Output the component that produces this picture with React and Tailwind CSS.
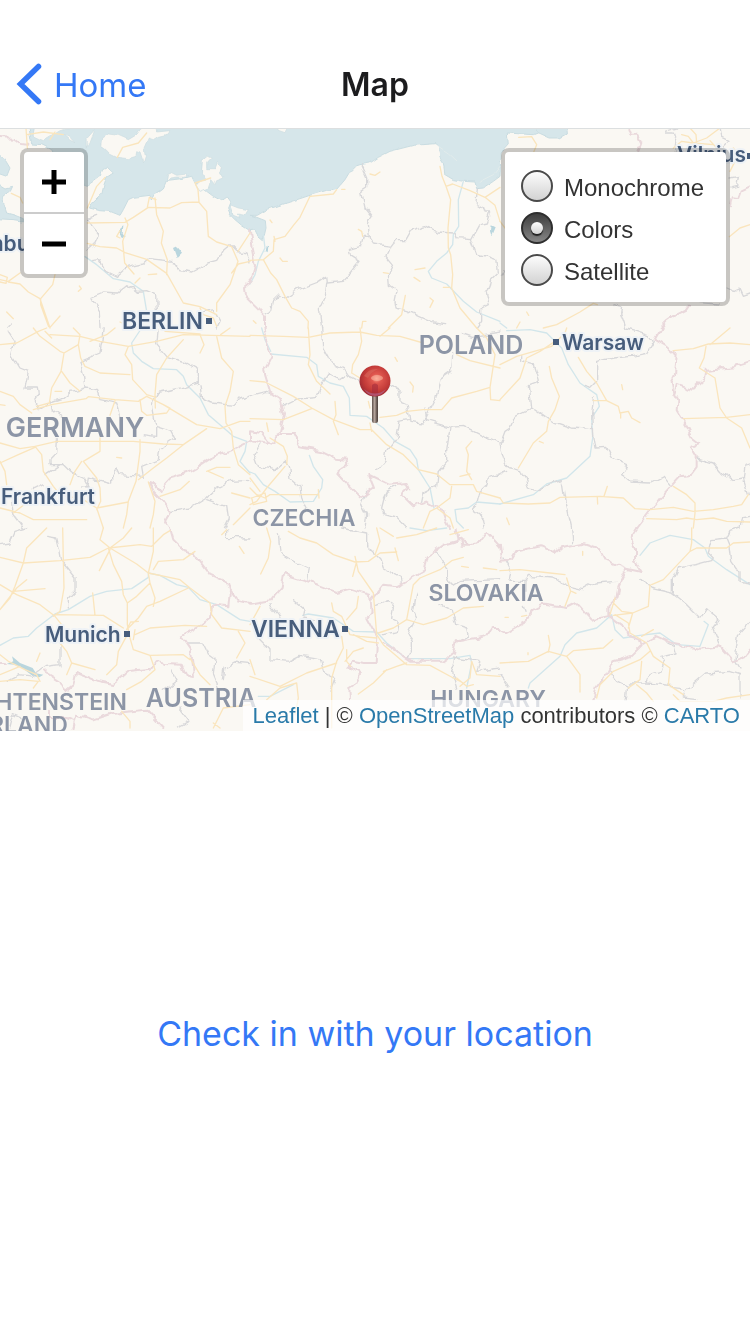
import { useState } from "react";

const LAYERS = ["Monochrome", "Colors", "Satellite"];

const COUNTRIES = [
  { name: "GERMANY", x: 75, y: 437, size: "text-[27px]" },
  { name: "POLAND", x: 471, y: 354, size: "text-[25px]" },
  { name: "CZECHIA", x: 304, y: 526, size: "text-[23px]" },
  { name: "SLOVAKIA", x: 486, y: 601, size: "text-[23px]" },
  { name: "AUSTRIA", x: 201, y: 707, size: "text-[25px]" },
  { name: "HUNGARY", x: 488, y: 707, size: "text-[23px]" },
  { name: "LIECHTENSTEIN", x: 36, y: 710, size: "text-[23px]" },
  { name: "SWITZERLAND", x: -16, y: 733, size: "text-[23px]" },
];

const CITIES = [
  { name: "BERLIN", x: 122, y: 329, size: "text-[23px]", dot: [206, 318] },
  { name: "Warsaw", x: 562, y: 350, size: "text-[21px]", dot: [553, 339] },
  { name: "VIENNA", x: 251, y: 637, size: "text-[23px]", dot: [342, 626] },
  { name: "Munich", x: 45, y: 642, size: "text-[21px]", dot: [124, 631] },
  { name: "Frankfurt", x: 1, y: 504, size: "text-[21px]" },
  { name: "Hamburg", x: -43, y: 251, size: "text-[21px]" },
  { name: "Vilnius", x: 677, y: 162, size: "text-[21px]", dot: [747, 153] },
];

/* Map lines, one entry per 250px sector; coordinates are thirds of a pixel. */
const SECTORS = [
  {
    x: 0,
    y: 128,
    roads:
      "M78 0L82 60M80 20L130 12L190 20M165 12L150 35M0 455L25 460L60 435M0 440L22 448L18 466L0 462M25 462L60 468L85 492L120 512L150 600M165 440L158 470L122 512L122 530L146 596M180 564L150 598M262 346L300 356L350 360L375 374L440 394L500 436L550 525L600 536L650 560M262 285L375 283L400 268L445 238L510 240L545 224L596 222L620 250L625 325L650 342L695 356L714 400L690 470L650 525L650 550M262 240L275 210L290 175L315 148M375 270L384 290L368 340L374 405L402 438M465 210L470 260L490 310L484 345L502 395L500 440M442 238L448 208L468 215M597 222L594 185L585 165L632 150M714 370L750 315M360 330L350 325L360 308M34 196L60 208L68 225M235 490L244 482L238 474M20 552L40 572M360 582L390 596M352 88L368 58L415 45L440 15M405 465L420 450M445 440L470 438M600 540L610 560L640 570L650 595M750 400L715 408L695 435",
    admin:
      "M262 366L280 350L295 320L275 295L268 270L290 262M275 398L300 395L320 430L350 445L380 418L430 408L448 392L520 400L535 425L575 432L620 408L650 400L672 365L690 350L710 370L738 375L750 402M270 508L310 492L350 495L380 470L410 490L440 488L470 502L472 550M270 508L298 550L300 600M610 550L640 545L660 580L650 600M25 600L40 585",
    rivers: "M255 386L290 410L340 452L390 462L430 490L440 550",
    borders: "M0 30L40 32L60 48L85 50M750 465L732 480L735 505L750 520",
  },
  {
    x: 250,
    y: 128,
    roads:
      "M0 397L40 395L70 370L72 335L105 325L132 290L150 268L180 205L250 198L260 185M72 325L75 340M40 395L62 435L80 455L105 505L125 540L150 550L175 580L174 600M570 115L576 145L588 175L602 215L594 300L595 360L602 380L608 440L605 480L630 540L680 600M588 175L608 168L660 188L705 208L735 232L750 280M705 208L750 178M415 600L455 560L466 502M360 138L375 142L390 132M275 184L285 184M325 304L335 310L338 325M90 390L98 400L112 400M495 425L525 420M492 448L510 460M400 434L415 436M540 510L550 518L540 538M335 600L338 580L348 580M580 478L600 478M10 578L18 586M60 276L66 284",
    admin:
      "M332 110L350 150L350 180L335 190L345 240L365 265L355 290L358 330L370 348L425 355L440 335L468 335L485 305L520 293L560 312L612 315L618 332L665 335L690 290L712 285L722 255L705 255L700 238L678 225L682 180M355 325L340 325L332 355L298 365L302 382L330 400L305 432L280 460L232 465L230 445L205 462L145 485L108 510L90 498L72 515L65 545L45 555M230 465L225 510L208 545L215 600M422 356L408 385L428 410L415 438L418 475L438 490L432 520L435 540L470 548L505 565L550 585L590 590M665 338L680 378L720 388L740 395L745 435L725 455L720 480L705 485L715 530L695 540L695 580L680 600",
    rivers:
      "M640 160L625 215L626 295L610 320L608 350L590 375L560 400L535 430L545 450L590 468L640 520L680 552L750 580M0 468L15 440L25 400L45 360L40 320",
    borders: "M0 310L8 360L18 410L10 450L0 462M0 520L25 545L45 565L45 600",
  },
  {
    x: 500,
    y: 128,
    roads:
      "M56 28L95 26L110 50L100 75M0 280L15 300M50 600L60 582M80 552L86 562M130 600L170 590L240 552L280 526L292 530M545 20L565 25L580 45L640 50M520 60L545 40L580 45L620 30L660 0M570 0L588 20L590 45M630 38L650 60M688 326L720 300L750 290M690 130L715 80L700 60",
    admin:
      "M495 15L520 15L530 45L525 80M495 10L530 0M660 0L665 28L690 40L670 60M690 150L715 145L710 175L690 180M678 480L700 490L720 480L730 502L750 495M345 530L365 535L362 555L378 600M600 524L655 528M5 440L15 425",
    rivers: "M0 585L20 600",
    borders:
      "M385 0L392 20L412 20L424 45L415 70M750 178L725 190L718 210L695 208L690 235M570 530L560 545L530 560L500 580L482 600",
  },
  {
    x: 0,
    y: 328,
    roads:
      "M0 50L50 45L115 10L140 0M100 0L120 25L180 70L192 75L235 50L240 20L220 0M150 20L240 25L300 40L385 55L470 40L550 20L750 25M385 55L375 80L395 110L398 155L440 200L468 208M192 75L183 130L155 180L148 225L110 235M185 130L210 165L240 190M235 50L242 90L255 115L300 135L390 140M0 190L40 205L60 230L95 255M100 245L155 230L258 212L265 206L345 215L415 220L440 205L490 230L540 260L590 290L660 302L720 280L750 280M345 218L330 262M420 215L425 250L440 262L500 255L510 240L490 230M650 25L665 90L700 130L690 190L675 235L678 285L695 310L700 360L715 410L750 440M550 35L500 90L470 140L465 200L466 240M0 345L60 362L105 355L170 340L300 340L400 340L490 348L550 350L620 302M105 355L125 380L130 430L160 475L180 500L250 515L290 540L310 600M245 400L225 430L210 470M300 330L300 370L250 400L290 450L300 480L302 520L290 545M420 335L420 370L408 460L385 520L380 560L370 600M415 455L460 420L500 390L550 350M290 540L385 522M0 540L60 555L100 575L175 575L260 575M445 462L465 520L460 560L450 600M0 400L15 430L20 470M40 555L105 505L150 490M480 505L540 485L568 460M620 430L650 418L690 418M625 430L670 450M695 495L750 510M750 540L700 590M495 10L600 18M600 20L612 50L600 75M662 20L690 0M135 10L155 30M270 40L320 20L345 0M0 230L15 232M165 190L185 190M350 388L365 390M0 405L55 380L105 358",
    admin:
      "M25 10L45 40L35 80L60 120L85 130L75 180L115 180L118 200L105 220L118 245L155 222L190 210L215 190L255 180L250 140L240 100L300 75L305 40L310 0M255 180L290 185L300 215L350 225L362 260M155 222L160 245L185 265M475 0L470 50L500 85L560 105L595 125L595 165L560 175L470 195L460 230L465 260L470 295L515 310L525 330L480 360L475 395L450 405L425 415L430 445L360 440L350 420L335 440L335 468L265 450L260 480M172 335L170 375L150 395L150 410L190 410L215 435L250 450L265 478L245 480M600 170L605 215L640 225L700 232L720 210L750 200M130 470L100 485M135 440L180 410M515 550L570 540L620 510L650 480L690 460L750 457M620 515L680 535L685 570L670 600M430 320L470 325L470 295M35 520L40 560L70 600",
    rivers:
      "M425 0L395 45L400 75L425 100L460 122L530 125L550 145L560 170L600 210L625 260L660 290L700 325L740 340L735 370L720 400L750 435",
    borders:
      "M750 340L700 365L650 380L600 412L560 435L510 448L490 470L482 492L465 470L450 465L465 495L490 520L512 550L495 580L510 600",
  },
  {
    x: 250,
    y: 328,
    roads:
      "M0 22L100 25L175 28L240 15L330 12L380 22L450 25L520 45M175 0L180 80L175 110L200 160L240 198M330 0L335 40L325 80L308 110L305 135L330 150M0 158L45 162L130 205L185 240L250 275L330 305L365 305L410 350L460 380L505 425L560 438L600 470L670 470L680 490L750 510M0 272L100 275L185 242M390 268L440 262L470 250L520 245L575 245L605 210L680 190L720 178L722 215L750 218M390 25L420 0M720 178L735 80L710 30L680 0M620 80L660 98L750 120M255 220L258 260L250 280L265 320M365 310L360 285M355 220L360 240M605 475L600 510L560 540L540 550L520 600M665 340L648 360L655 380L650 430L665 455M0 480L20 500L45 510L60 500L205 500M0 450L30 490M105 415L50 480L20 520L0 530M60 330L100 355L112 385L110 410M50 285L55 310M5 510L45 495L50 520L10 530L5 510M630 445L660 438M435 88L442 100M480 162L490 175L488 192M205 485L207 510M560 540L600 570L610 600",
    admin:
      "M215 0L218 60L240 100L285 125L290 140L340 165L420 175L450 190L450 220L472 230L480 280L520 285L555 215L570 155L605 130L608 80M100 235L150 210L200 205L215 170L235 140L265 155L285 140M0 203L50 190L60 195M640 15L670 25L750 12M525 240L530 278L600 298L640 295L700 325L750 345M600 298L590 370L590 400L565 430L560 475L520 495L515 520M475 275L450 280L440 330L410 370L405 400L380 430M30 350L12 380L25 415L75 425L105 400L115 415L120 450L150 475L155 510L170 540M750 438L715 445L710 470L690 490L680 530L665 545L700 570L705 600M405 500L395 540L400 560L440 570L470 600M440 475L410 490L400 510M350 490L335 530L350 560L345 600",
    rivers:
      "M62 78L170 88L200 110L205 145L240 165L280 175L298 210L300 262L350 265L400 300L435 340L480 365L500 395L505 425L540 480L552 540M0 432L15 438L40 470L75 490L120 522L190 520L215 480L218 455L190 415L178 382M750 528L680 522L655 540L615 545L620 580L640 600M35 0L45 35L62 70",
    borders:
      "M40 0L48 35L65 85L42 130L60 190L90 210L102 260L90 310L70 350L40 345L0 335L0 310L35 315L60 350M90 318L130 318L150 358L215 370L260 392L292 395L295 410L262 435L330 508L372 480L355 438L420 470L468 465L475 480L455 500L490 535L530 520L580 548L590 580L600 600",
  },
  {
    x: 500,
    y: 328,
    roads:
      "M165 40L120 70L80 90L60 150L0 215M0 110L50 85L155 55L195 15L200 0M148 115L155 150L178 205L165 245L145 280L140 310L100 345L55 420M235 88L260 130L290 165L320 218L355 235L360 255L385 250L395 270L420 284M280 218L320 218M520 68L580 62L625 48L690 45L750 50M630 50L690 0M618 55L612 90L598 120L645 150L660 240L680 270L725 300L750 360M550 272L680 268L750 260M0 510L10 525L85 528L150 525L180 508L300 505L370 510L405 542L450 545L520 538L580 550L640 545L700 535L725 530L745 500M520 475L560 500L585 525L585 555L580 600M440 572L530 575L560 570L590 575L640 570L680 580L750 582M292 508L293 528M312 505L322 475M365 170L368 185M118 340L130 345M20 570L28 590M362 255L362 270",
    admin:
      "M65 80L65 100L100 110L115 160L88 170L95 240L45 265L30 300L15 310L0 350L10 390L20 415L65 425L85 480L118 485L155 465L190 458M95 240L150 278L215 300L275 305M290 160L270 180L255 175M290 160L290 100L340 90L395 85L440 75L460 40L445 20L410 8L380 0M280 210L275 260L278 320L285 360L320 358L335 390L380 410L362 440L390 462L450 465L490 445L510 470M592 390L640 405L665 435L700 455L730 450L745 500M190 465L200 530L215 600M750 565L725 570L720 600M730 450L735 415L750 410M0 435L20 430",
    rivers:
      "M20 8L90 5L140 15L185 60L205 110L240 165L290 200L298 235L275 270L278 330L270 385L200 450L140 468L100 500L0 528",
    borders:
      "M485 0L465 35L500 55L530 80L525 140L515 160L520 195L532 215L530 250L560 300L575 330L595 345L572 355L590 385L590 420L575 440L540 445L480 510L412 600M525 195L530 170L575 185L615 150L620 125L700 118L750 102",
  },
  {
    x: 0,
    y: 528,
    roads:
      "M0 88L70 105L180 98L270 88L325 60L420 50L455 55L490 20L510 8M140 0L80 60L70 105L45 175L30 210L0 245M188 0L190 95L192 180L180 250L160 265M325 60L340 110L365 160L370 200L382 225L382 290L390 330L400 365L450 382L550 380L570 395M310 0L300 35L330 60L370 30L395 0M330 60L410 108L445 135L460 70L460 0M445 135L540 155L570 180L630 225L635 260L665 300L750 310M565 180L480 220L440 235L415 270L385 300M445 135L450 165L410 205L382 225M460 125L475 100L550 95L585 70M165 260L310 262L370 300M278 195L285 262M0 170L50 200L120 230L165 265L185 290M0 245L50 180L80 155M40 190L135 182M405 320L450 300L555 292L620 295M382 320L355 370L350 410L320 440M180 345L200 370L215 405L285 425M200 440L215 405M0 380L25 400L75 425L110 440L120 460M450 382L465 425L425 460L380 485M570 390L600 440L630 470M715 310L735 345L710 390M0 440L60 415M450 165L465 210L460 235M365 550L390 580L390 600M640 600L670 540L750 530M640 585L660 600M0 460L60 455L115 460L100 480M665 20L680 5M718 55L732 76M298 128L312 100L330 65M380 305L392 282L415 280M405 305L400 335M110 400L120 375",
    admin:
      "M140 25L170 30L180 70L185 100L225 150L225 190L205 210L205 240M180 345L180 410L140 415L100 445L60 440L20 460M680 0L680 28L750 30M0 50L30 45L45 10L80 0M560 345L610 345L625 375L645 390L640 440L655 475M750 410L700 405L675 420L670 455M515 430L530 460L490 490M540 540L570 580L535 600M75 575L40 560L30 600",
    rivers:
      "M0 352L40 330L85 325L110 300L165 258L205 245L270 205L320 190L395 182L445 148L445 135L480 142L530 170L565 178L600 215L650 230L720 275L750 280",
    borders:
      "M510 0L520 35L550 65L580 75L630 140L685 165L690 185L715 220L750 228M690 185L685 235L640 230L632 270L600 295L545 325L572 365L580 420L582 450L560 445L545 410L495 408L470 402L455 425L385 432L340 468L280 455L228 435L220 470L195 490L180 460L140 435L135 430M220 600L230 560L280 575L340 555L440 545L490 600M150 545L150 570L200 570L225 580M0 405L15 405",
  },
  {
    x: 250,
    y: 528,
    roads:
      "M115 10L150 30L200 45L250 80L315 102L355 100L390 75L440 72M50 0L62 40L55 90L32 138M315 85L325 130L370 195L380 320L400 350L470 410L540 412L610 450L640 465M320 100L308 145M375 80L390 40L380 0M245 225L250 250L275 265L300 320L330 325L380 330M325 205L320 240L290 275M385 315L430 300L470 275L520 290L590 270L640 240L700 235M470 275L490 170L510 150L570 125L605 98L640 88M400 430L440 415L470 405M325 498L370 465L410 425M275 325L280 360L260 400L245 450L245 600M0 445L90 475L170 435L260 405M0 395L15 440M50 515L90 480L140 465L145 510L135 560M290 365L290 400L302 415M310 320L350 340L385 345M440 30L500 20L560 0M390 0L430 25M630 475L660 450L665 400L680 440L750 445M620 450L650 475L670 470M635 115L655 118M700 120L740 125M435 60L445 98M600 20L655 5M0 290L30 235M285 400L310 370L340 360",
    admin:
      "M85 20L90 75L120 95L175 120L170 155M275 0L350 15L350 50L390 90L400 120L450 145L455 170M60 230L90 265M130 215L165 245L160 270L190 275M25 330L60 365L60 395L120 400L150 385L210 395L220 430L255 450L240 490M380 235L415 220L430 240L425 270L445 280L440 310L400 320M500 195L490 250L500 270L475 320L490 340L490 375L470 390M560 70L590 120L590 145L605 175L630 160L750 155M570 230L610 250L620 290L650 300L655 325L620 340M620 385L605 430L620 480M610 390L690 400L680 430L750 420",
    rivers:
      "M158 262L175 258L250 270L310 310L380 312L410 345L470 392L600 392L660 382L665 405L650 480M480 0L530 8L590 0M25 505L60 505L130 470",
    borders:
      "M0 230L60 220L95 180L102 138L190 165L260 192L300 182L360 200L365 250L352 270L385 330L380 405L345 405L310 398L295 415L330 435L320 465L298 480L300 515M365 215L400 170L440 175L520 130L530 85L580 50L635 35L640 50L680 50L710 12L750 55M620 0L625 35L655 45M750 300L725 300L710 325L620 340L612 375L580 398L480 398L400 345",
  },
  {
    x: 500,
    y: 528,
    roads:
      "M0 128L60 125L150 135L195 140M200 150L212 190L195 235M0 405L85 400L145 370L200 385L240 440L240 492M200 385L220 368L310 360L338 335M145 322L150 350L145 372M330 260L345 210M340 225L365 250L398 255L445 235L450 170M345 260L385 285L390 315L440 345L460 385L510 420L505 470L550 500M455 170L490 155L570 70L590 60L680 60L700 45L750 42M575 0L575 45L570 70M290 510L300 470L340 430L420 395L450 370M340 262L398 255L385 300M215 190L228 196M410 470L440 495L460 520M520 500L540 520L640 520L680 510L750 500M425 325L460 305M15 268L25 268M65 265L80 262M248 70L248 82M84 374L84 380M385 480L420 455L425 400",
    admin:
      "M15 90L35 130L30 160L75 160L85 145L160 150L210 175L250 185L285 165L350 160M215 0L218 45M70 235L75 250M75 160L75 190M425 150L450 180L515 195L560 230L575 245L600 270L620 242L660 275L640 300L660 350M520 195L520 150L535 120L590 110L635 98L640 90L625 75L635 35L680 30L690 55L695 100L720 135L720 160L750 165M330 430L350 460L380 475L375 520M385 465L440 465L450 440L480 430L490 400L480 385L525 375L520 355L500 345M440 465L540 475L555 490L550 510L590 515M560 485L620 435L690 430L720 440L720 510M750 280L715 320L705 395L720 420M0 440L30 480M680 30L690 10L720 0",
    rivers:
      "M85 480L90 465L180 385L195 350L230 315L290 300L335 260L345 305L370 330L420 322L480 315L530 350L600 355L625 290L612 280M420 82L450 45L510 22L580 35L615 60L625 85L680 125L750 170",
    borders:
      "M0 98L35 95L50 70L120 55L165 75L185 58L250 45L295 60L315 95L380 122L425 132L405 100L405 60L392 30L412 0M380 122L355 175L350 210L325 235L325 265L275 275L230 225L200 240L130 230L100 245L80 280L20 315L0 305M325 265L385 310L390 325L420 335L425 355L395 385L340 400L320 440L290 480L280 515M425 350L470 325L520 348L600 362L660 355L700 400L735 385L750 365M0 50L5 90",
  },
];

function MapCanvas() {
  return (
    <svg
      aria-hidden="true"
      viewBox="0 128 750 603"
      preserveAspectRatio="xMinYMin slice"
      className="absolute inset-0 size-full"
      fill="none"
      strokeLinejoin="round"
      strokeLinecap="round"
    >
      <defs>
        <filter id="rough" x="0" y="128" width="750" height="603" filterUnits="userSpaceOnUse" colorInterpolationFilters="sRGB">
          <feTurbulence type="fractalNoise" baseFrequency="0.12" numOctaves="1" seed="4" />
          <feDisplacementMap in="SourceGraphic" scale="8" xChannelSelector="R" yChannelSelector="G" />
        </filter>
        <filter id="coast" x="0" y="128" width="750" height="200" filterUnits="userSpaceOnUse" colorInterpolationFilters="sRGB">
          <feTurbulence type="fractalNoise" baseFrequency="0.12" numOctaves="1" seed="9" />
          <feDisplacementMap in="SourceGraphic" scale="4" xChannelSelector="R" yChannelSelector="G" />
        </filter>
      </defs>
      <rect y="128" width="750" height="603" fill="#faf8f3" />
      <g filter="url(#coast)">
        <g transform="translate(0 128) scale(0.33333333)" stroke="#c9dce1" strokeWidth="3">
          <path
            fill="#d6e6ea"
            d="M85 -9L95 48L125 50L155 65L170 95L200 150L262 172L280 160L300 145L308 125L322 118L340 135L320 148L312 170L305 200L275 228L268 240L300 248L330 250L360 262L370 245L385 215L400 208L450 202L454 216L462 200L490 180L500 157L545 152L575 145L585 165L600 172L620 190L640 205L665 218L680 208L690 222L683 240L692 262L705 275L725 292L750 308L765 306L772 320L790 335L798 300L796 278L770 268L750 262L772 262L800 245L860 225L930 202L980 187L1012 182L1035 155L1050 130L1065 115L1080 110L1110 105L1135 88L1170 70L1240 52L1305 47L1315 55L1320 90L1330 105L1335 140L1360 155L1390 160L1425 162L1430 182L1450 180L1480 160L1500 145L1503 75L1525 50L1522 15L1600 20L1620 12L1630 -9Z"
          />
          <path fill="#d6e6ea" d="M1590 -9L1700 -9L1702 18L1680 30L1650 30L1615 14Z" />
          <path fill="#d6e6ea" d="M-9 75L15 95L30 120L20 145L-9 135ZM-9 165L15 180L35 175L28 190L8 205L12 230L20 255L45 262L70 272L70 282L40 278L-9 275Z" />
          <g fill="#faf8f3" stroke="#ccdde1" strokeWidth="2">
            <path d="M305 55L308 30L325 18L355 22L385 35L410 20L420 5L440 -9L465 -9L470 12L510 8L505 18L475 25L460 35L445 30L432 60L436 82L430 102L420 72L410 68L408 85L385 92L350 88L330 78L318 65Z" />
            <path d="M503 140L515 134L530 142L560 138L558 148L530 147L510 150L500 160Z" />
            <path d="M608 95L622 85L634 90L620 105L620 122L645 122L652 104L664 115L660 130L672 150L650 158L645 170L635 158L628 180L600 190L588 172L600 160L618 155L605 135Z" />
            <path d="M193 20L210 28L225 45L210 36ZM262 30L285 4L270 45L262 60ZM105 -9L255 -9L180 8L130 38L100 24ZM690 230L715 240L745 245L735 262L712 258L720 270L700 262Z" />
            <path d="M820 -9L865 -9L855 14L838 8Z" />
          </g>
          <path d="M1315 55L1345 75L1370 98M1440 160L1480 140L1500 115" stroke="#e2ecec" />
          <path fill="#b9d6de" stroke="none" d="M362 298L370 292L368 318L374 325L364 332L360 320ZM519 360L530 355L546 374L530 390ZM800 350L805 352L803 376L797 372ZM1472 292L1484 298L1474 322L1470 310Z" />
        </g>
      </g>
      <g transform="translate(0 528) scale(0.33333333)">
        <path fill="#b9d6de" d="M20 408L40 400L36 385L60 405L98 420L108 436L130 440L118 448L98 444L70 422L45 410Z" />
      </g>
      {SECTORS.map((s) => (
        <g key={`${s.x}-${s.y}`} transform={`translate(${s.x} ${s.y}) scale(0.33333333)`}>
          <path d={s.rivers} stroke="#d2e6eb" strokeWidth="4" />
        </g>
      ))}
      <g filter="url(#rough)">
        {SECTORS.map((s) => (
          <g key={`${s.x}-${s.y}`} transform={`translate(${s.x} ${s.y}) scale(0.33333333)`}>
            <path d={s.admin} stroke="#d8d8da" strokeWidth="4" />
            <path d={s.borders} stroke="#ead9dc" strokeWidth="6" />
          </g>
        ))}
      </g>
      {SECTORS.map((s) => (
        <g key={`${s.x}-${s.y}`} transform={`translate(${s.x} ${s.y}) scale(0.33333333)`}>
          <path d={s.roads} stroke="#fae5bd" strokeWidth="4" />
        </g>
      ))}
      <g fill="#8c95a6" textAnchor="middle" className="font-['Inter',sans-serif] font-semibold">
        {COUNTRIES.map((c) => (
          <text key={c.name} x={c.x} y={c.y} className={c.size}>
            {c.name}
          </text>
        ))}
      </g>
      <g fill="#475d7c" className="font-['Inter',sans-serif] font-semibold">
        {CITIES.map((c) => (
          <g key={c.name}>
            <text x={c.x} y={c.y} className={c.size} stroke="#eef2f6" strokeWidth="4" paintOrder="stroke">
              {c.name}
            </text>
            {c.dot && <rect x={c.dot[0]} y={c.dot[1]} width="6" height="6" />}
          </g>
        ))}
      </g>
    </svg>
  );
}

function Pin() {
  return (
    <svg aria-label="Marker" role="img" viewBox="0 0 32 60" className="h-15 w-8">
      <defs>
        <radialGradient id="ball" cx="0.55" cy="0.42" r="0.6">
          <stop offset="0" stopColor="#f9a28e" />
          <stop offset="0.25" stopColor="#e0584f" />
          <stop offset="0.7" stopColor="#c23a38" />
          <stop offset="1" stopColor="#9c2a33" />
        </radialGradient>
        <linearGradient id="needle">
          <stop offset="0" stopColor="#5c504b" />
          <stop offset="0.45" stopColor="#b8a8a0" />
          <stop offset="0.7" stopColor="#756761" />
          <stop offset="1" stopColor="#4c413d" />
        </linearGradient>
      </defs>
      <rect x="13" y="29" width="6" height="30" rx="2" fill="url(#needle)" />
      <circle cx="16" cy="17" r="15.5" fill="url(#ball)" />
      <path d="M5 12Q10 4 19 5Q12 8 9 14Z" fill="#d8675c" opacity="0.6" />
      <ellipse cx="18" cy="14" rx="6" ry="3" fill="#fbb5a0" opacity="0.6" />
      <path d="M13 21Q16 18 19 21V31H13Z" fill="#a32d3c" opacity="0.6" />
      <path d="M5 25Q16 34 27 25Q23 32 16 32Q9 32 5 25Z" fill="#b56a94" opacity="0.6" />
    </svg>
  );
}

function ZoomControl() {
  return (
    <div className="absolute left-5 top-5 flex w-17 flex-col overflow-hidden rounded-lg border-4 border-black/20 bg-white bg-clip-padding">
      <button type="button" aria-label="Zoom in" className="flex h-15 items-center justify-center">
        <svg viewBox="0 0 24 24" className="size-6">
          <path d="M0 12H24M12 0V24" stroke="#000" strokeWidth="5" />
        </svg>
      </button>
      <button type="button" aria-label="Zoom out" className="box-content flex h-15 items-center justify-center border-t-2 border-[#ccc]">
        <svg viewBox="0 0 24 24" className="size-6">
          <path d="M0 12H24" stroke="#000" strokeWidth="5" />
        </svg>
      </button>
    </div>
  );
}

function LayerControl() {
  const [active, setActive] = useState("Colors");
  return (
    <fieldset className="absolute right-5 top-5 rounded-lg border-4 border-black/20 bg-white bg-clip-padding pb-[11px] pl-4 pr-[22px] pt-[13px] font-['Liberation_Sans',Arial,sans-serif] text-[24px] text-[#333]">
      {LAYERS.map((layer) => (
        <label key={layer} className="flex h-[42px] items-center gap-[11px]">
          <input
            type="radio"
            name="layer"
            checked={active === layer}
            onChange={() => setActive(layer)}
            className="relative size-8 shrink-0 appearance-none rounded-full border-2 border-[#4a4a4a] bg-linear-to-b from-white to-[#d0d0d0] bg-origin-border checked:border-[#2e2e2e] checked:from-[#3a3a3a] checked:to-[#8c8c8c] checked:before:absolute checked:before:left-2 checked:before:top-2 checked:before:size-3 checked:before:rounded-full checked:before:bg-linear-to-b checked:before:from-white checked:before:to-[#d4d4d4] checked:before:shadow-[0_2px_1px_#222]"
          />
          <span className="pt-1 leading-7">{layer}</span>
        </label>
      ))}
    </fieldset>
  );
}

export default function App() {
  return (
    <div className="flex min-h-screen flex-col bg-white font-['Inter',sans-serif]">
      <header className="relative z-10 grid h-32 shrink-0 grid-cols-3 items-center bg-white px-4 pt-10 shadow-[0_1px_0_#dcdfe0]">
        <a href="#home" className="flex items-center gap-3 text-[33px] leading-10 text-[#3478f6]">
          <svg viewBox="0 0 26 42" className="h-[42px] w-[26px]" fill="none">
            <path d="M22.5 3.5L4.5 21L22.5 38.5" stroke="currentColor" strokeWidth="5.5" strokeLinecap="round" strokeLinejoin="miter" />
          </svg>
          <span className="pt-0.5">Home</span>
        </a>
        <h1 className="pt-0.5 text-center text-[32px] font-semibold leading-10 text-[#1c1c1e]">Map</h1>
      </header>

      <main className="flex flex-1 flex-col">
        <section aria-label="Map" className="relative flex flex-1 basis-0 overflow-hidden bg-[#faf8f3]">
          <MapCanvas />
          <div className="absolute left-1/2 top-1/2 -translate-x-1/2 -translate-y-[66px]">
            <Pin />
          </div>
          <ZoomControl />
          <LayerControl />
          <p className="absolute bottom-0 right-0 whitespace-nowrap bg-white/70 px-2.5 pt-px font-['Liberation_Sans',Arial,sans-serif] text-[22px] leading-[30px] text-[#333]">
            <a href="#leaflet" className="text-[#2a7aa9]">Leaflet</a> | ©{" "}
            <a href="#osm" className="text-[#2a7aa9]">OpenStreetMap</a> contributors ©{" "}
            <a href="#carto" className="text-[#2a7aa9]">CARTO</a>
          </p>
        </section>
        <section className="flex flex-1 basis-0 items-center justify-center">
          <button type="button" className="pt-0.5 text-[34px] leading-10 text-[#3478f6]">
            Check in with your location
          </button>
        </section>
      </main>
    </div>
  );
}
